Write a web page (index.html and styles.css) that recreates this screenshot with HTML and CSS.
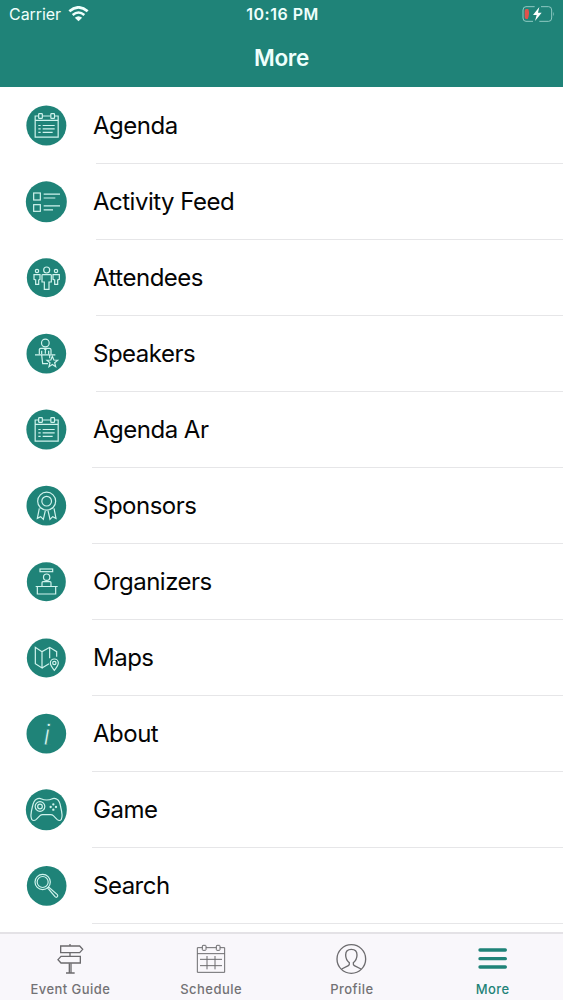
FILE: index.html
```html
<!DOCTYPE html>
<html lang="en">
  <head>
    <meta charset="UTF-8" />
    <meta name="viewport" content="width=device-width, initial-scale=1.0" />
    <title>More</title>
    <link rel="stylesheet" href="styles.css">
  </head>

  <body>
    <header>
      <div class="status-bar">
        <div class="carrier">
          <span>Carrier</span>
          <svg class="wifi" viewBox="0 0 63 48">
            <path d="M4 16 Q31.500 -8 59 16" stroke-width="8" />
            <path d="M14 27 Q31.500 12 49 27" stroke-width="7.500" />
            <path class="solid" d="M20.500 35 Q31.500 26 42.500 35 L31.500 46z" />
          </svg>
        </div>
        <div class="time">10:16 PM</div>
        <div class="battery">
          <svg viewBox="0 0 102 48">
            <path class="case" d="M38 2 H12 Q3 2 3 12 V36 Q3 46 12 46 H33 M57 2 H80 Q89 2 89 12 V36 Q89 46 80 46 H52" />
            <path class="cap" d="M94 17 Q99 24 94 31z" />
            <path class="level" d="M19 9 H13 Q8 9 8 15 V33 Q8 39 13 39 H17 Q24 24 19 9z" />
            <path class="bolt" d="M52 3 L33 27 H44 L39 45 L59 20 H48z" />
          </svg>
        </div>
      </div>
      <h1>More</h1>
    </header>

    <main>
      <ul class="menu">
        <li class="inset">
          <svg class="icon" viewBox="0 0 126 126">
            <circle class="disc" cx="64" cy="61.500" r="60" />
            <path d="M41 33 H30.500 V96.500 H99.500 V33 H89 M52 33 H77 M30.500 46 H99.500" />
            <rect x="41" y="26" width="11" height="14" rx="2" />
            <rect x="77.500" y="26" width="11" height="14" rx="2" />
            <path d="M40 61.500 H47 M40 71.500 H47 M40 82 H47 M53 61.500 H89 M53 71.500 H89 M53 82 H83" />
          </svg>
          <span>Agenda</span>
        </li>
        <li class="inset">
          <svg class="icon" viewBox="0 0 126 126">
            <circle class="disc" cx="64" cy="62.500" r="61.500" />
            <rect x="26" y="36" width="20" height="21" />
            <rect x="26" y="71" width="20" height="20" />
            <path d="M56 39.500 H105 M56 51 H91 M56 74.500 H105 M56 86.500 H84" />
          </svg>
          <span>Activity Feed</span>
        </li>
        <li class="inset">
          <svg class="icon" viewBox="0 0 126 126">
            <circle class="disc" cx="64" cy="62.500" r="58.500" />
            <circle cx="65" cy="39" r="9" />
            <circle cx="36" cy="42" r="5" />
            <circle cx="93" cy="42" r="5" />
            <path d="M51 55 Q51 53 54 53 H76 Q79 53 79 55 V75 H72 V97 H58 V75 H51z" />
            <path d="M27 53 H45 V67 L41 69 V82 H32 V69 L27 67z" />
            <path d="M84 53 H103 V67 L98 69 V82 H89 V69 L84 67z" />
          </svg>
          <span>Attendees</span>
        </li>
        <li class="inset">
          <svg class="icon" viewBox="0 0 126 126">
            <circle class="disc" cx="64" cy="62" r="59.500" />
            <circle cx="61" cy="30" r="11.500" />
            <path d="M43 64 V49 Q44 46 48 46 H73 Q78 46 78 50 V64 M50 53 V64 M71 53 V64 M57 46 L61 51 L65 46 M61 51 V62" />
            <path d="M30 65.500 H91 M50 66 L53 92 H69 M74 66 V76" />
            <path class="cut" d="M82 70 L86.500 81 L98 81.500 L89 89 L92 101 L82 94.500 L72 101 L75 89 L66 81.500 L77.500 81z" />
          </svg>
          <span>Speakers</span>
        </li>
        <li>
          <svg class="icon" viewBox="0 0 126 126">
            <circle class="disc" cx="64" cy="61.500" r="60" />
            <path d="M41 33 H30.500 V96.500 H99.500 V33 H89 M52 33 H77 M30.500 46 H99.500" />
            <rect x="41" y="26" width="11" height="14" rx="2" />
            <rect x="77.500" y="26" width="11" height="14" rx="2" />
            <path d="M40 61.500 H47 M40 71.500 H47 M40 82 H47 M53 61.500 H89 M53 71.500 H89 M53 82 H83" />
          </svg>
          <span>Agenda Ar</span>
        </li>
        <li>
          <svg class="icon" viewBox="0 0 126 126">
            <circle class="disc" cx="64" cy="62" r="59.500" />
            <circle cx="65" cy="48.500" r="27" />
            <circle cx="65" cy="48.500" r="14.500" />
            <path d="M43 70 L37 100 L47 95 L55 103 L61 77 M87 70 L93 100 L83 95 L75 103 L69 77" />
          </svg>
          <span>Sponsors</span>
        </li>
        <li>
          <svg class="icon" viewBox="0 0 126 126">
            <circle class="disc" cx="64" cy="62.500" r="58.500" />
            <rect x="45" y="24" width="38" height="8" />
            <circle cx="65" cy="48.500" r="9.500" />
            <path d="M51 76 V65 Q51 62 54 62 H75 Q78 62 78 65 V76" />
            <path d="M32 76.500 H98 M37 77 V99 H92 V77" />
          </svg>
          <span>Organizers</span>
        </li>
        <li>
          <svg class="icon" viewBox="0 0 126 126">
            <circle class="disc" cx="64" cy="63" r="58.500" />
            <path d="M51 44 L31 31 V80 L51 93 V44 L74 31 L95 44 V59 M51 93 L72 80 M74 31 V64" />
            <path d="M88 100 Q76 85 76 78 A12 12 0 0 1 100 78 Q100 85 88 100z" />
            <circle cx="88" cy="78" r="5" />
          </svg>
          <span>Maps</span>
        </li>
        <li>
          <svg class="icon" viewBox="0 0 126 126">
            <circle class="disc" cx="64" cy="62" r="59.500" />
            <text x="65" y="97">i</text>
          </svg>
          <span>About</span>
        </li>
        <li>
          <svg class="icon" viewBox="0 0 126 126">
            <circle class="disc" cx="64" cy="62.500" r="61.500" />
            <path d="M34 31 Q42 26 50 30 Q55 33 65 33 Q75 33 80 30 Q88 26 96 31 Q104 35 107 54 Q114 81 109 91 Q104 98 96 91 L85 80 Q82 77 77 77 H53 Q48 77 45 80 L34 91 Q26 98 20 91 Q15 81 22 54 Q26 35 34 31z" />
            <circle cx="45" cy="52.500" r="14.500" />
            <circle cx="45" cy="52.500" r="7" />
            <path class="buttons" d="M85 46 v0 M85 62 v0 M77 54 v0 M93 54 v0" />
          </svg>
          <span>Game</span>
        </li>
        <li>
          <svg class="icon" viewBox="0 0 126 126">
            <circle class="disc" cx="65" cy="62.500" r="59.500" />
            <circle cx="53" cy="51" r="23" />
            <circle cx="53" cy="51" r="16.500" />
            <path d="M68 69 L71 66 L97 89 Q100 93 96 96 Q93 98 90 95z" />
          </svg>
          <span>Search</span>
        </li>
      </ul>
    </main>

    <nav class="tabs">
      <a class="tab">
        <svg viewBox="0 0 96 96">
          <g class="heavy">
            <path d="M20 9 H77 L86 19 L77 29 H20z M79 40 H21 L12 50 L21 60 H79z" />
            <path d="M48 3 V9 M48 30 V39 M36 90 H62" />
            <path d="M46 61 V90 M51 61 V90" />
          </g>
        </svg>
        <span>Event Guide</span>
      </a>
      <a class="tab">
        <svg viewBox="0 0 96 96">
          <path d="M22 14 H7 V88 H89 V14 H75 M33 14 H64 M7 32 H89" />
          <rect x="22" y="7" width="11" height="15" rx="2" />
          <rect x="64" y="7" width="11" height="15" rx="2" />
          <path d="M36 39 V79 M60 39 V79 M15 49 H81 M15 68 H81" />
        </svg>
        <span>Schedule</span>
      </a>
      <a class="tab">
        <svg viewBox="0 0 96 96">
          <g class="heavy">
            <circle cx="46" cy="48" r="43" />
            <path d="M17 78 L37 68 Q41 65 40 59 Q29 50 29 36 Q29 19 46 19 Q63 19 63 36 Q63 50 52 59 Q51 65 55 68 L75 78" />
          </g>
        </svg>
        <span>Profile</span>
      </a>
      <a class="tab active">
        <svg viewBox="0 0 96 96">
          <path class="bars" d="M9 21 H85 M9 47 H85 M9 72 H85" />
        </svg>
        <span>More</span>
      </a>
    </nav>
  </body>
</html>
```

FILE: styles.css
```css
* {
  margin: 0;
  padding: 0;
  box-sizing: border-box;
}

body {
  height: 1000px;
  display: flex;
  flex-direction: column;
  overflow: hidden;
  font-family: Inter, Roboto, sans-serif;
  background-color: #fff;
  color: #050505;
}

svg {
  display: block;
  fill: none;
}

header {
  height: 87px;
  flex-shrink: 0;
  background-color: #1f8378;
  color: #effffc;
}

.status-bar {
  display: grid;
  grid-template-columns: 1fr auto 1fr;
  align-items: center;
  height: 28px;
  padding: 0 7px 0 9px;
  font-size: 16px;
  line-height: 28px;
}

.carrier {
  display: flex;
  align-items: center;
  gap: 7px;
  letter-spacing: -0.05px;
}

.wifi {
  width: 21px;
  height: 16px;
  stroke: #effffc;
}

.wifi .solid {
  fill: #effffc;
  stroke: none;
}

.time {
  font-weight: 600;
  letter-spacing: 0.5px;
}

.battery svg {
  width: 34px;
  height: 16px;
  margin-left: auto;
}

.battery .case {
  stroke: #8fc9c2;
  stroke-width: 3;
}

.battery .cap {
  fill: #8fc9c2;
}

.battery .level {
  fill: #e0524c;
}

.battery .bolt {
  fill: #fff;
}

h1 {
  text-align: center;
  font-size: 22.5px;
  font-weight: 600;
  letter-spacing: -0.3px;
  line-height: 60px;
}

main {
  height: 845px;
  flex-shrink: 0;
  padding-top: 1px;
  overflow: hidden;
}

.menu {
  list-style: none;
}

.menu li {
  display: flex;
  align-items: center;
  gap: 26px;
  height: 76px;
  padding: 0 0 1px 25px;
  font-size: 24px;
  letter-spacing: -0.5px;
  background: linear-gradient(#e6e6e8, #e6e6e8) 92px 100% / 100% 1px no-repeat;
}

.menu .inset {
  background-position: 96px 100%;
}

.icon {
  width: 42px;
  height: 42px;
  stroke: #d0f3ed;
  stroke-width: 3.6;
}

.icon .disc {
  fill: #1f8378;
  stroke: none;
}

.icon .cut {
  fill: #1f8378;
}

.icon .buttons {
  stroke-width: 7;
  stroke-linecap: round;
}

.icon text {
  font-family: "Liberation Serif", serif;
  font-size: 104px;
  font-style: italic;
  text-anchor: middle;
  fill: #d0f3ed;
  stroke: #1f8378;
  stroke-width: 3;
}

.tabs {
  display: grid;
  grid-template-columns: repeat(4, 1fr);
  height: 68px;
  flex-shrink: 0;
  border-top: 2px solid #e4e2e6;
  background-color: #f9f7fb;
}

.tab {
  display: flex;
  flex-direction: column;
  align-items: center;
  padding-top: 9px;
  font-size: 13px;
  font-weight: 500;
  letter-spacing: 0.45px;
  line-height: 16px;
  color: #737275;
}

.tab svg {
  width: 32px;
  height: 32px;
  margin-bottom: 6px;
  stroke: #6c6b6e;
  stroke-width: 3;
}

.tab .heavy {
  stroke-width: 4;
}

.tab .bars {
  stroke: #1f8378;
  stroke-width: 10;
  stroke-linecap: round;
}

.active {
  color: #1f8378;
}
```
